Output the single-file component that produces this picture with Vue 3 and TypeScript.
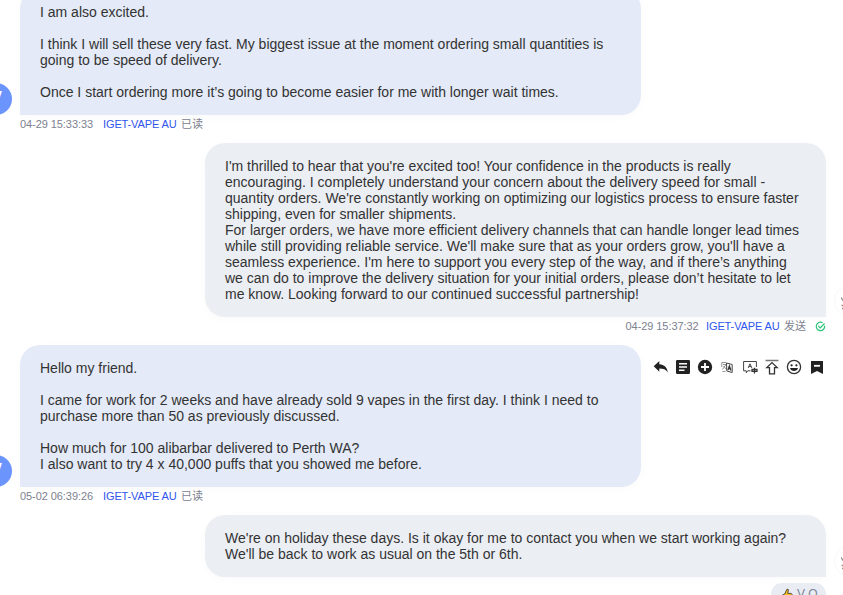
<script setup lang="ts">
interface Message {
  side: 'in' | 'out'
  lines: string[]
  time?: string
  status?: string
  actions?: boolean
}

const account = 'IGET-VAPE AU'

const messages: Message[] = [
  {
    side: 'in',
    lines: [
      'I am also excited.',
      '',
      'I think I will sell these very fast. My biggest issue at the moment ordering small quantities is',
      'going to be speed of delivery.',
      '',
      'Once I start ordering more it’s going to become easier for me with longer wait times.',
    ],
    time: '04-29 15:33:33',
    status: '已读',
  },
  {
    side: 'out',
    lines: [
      "I'm thrilled to hear that you're excited too! Your confidence in the products is really",
      'encouraging. I completely understand your concern about the delivery speed for small -',
      "quantity orders. We're constantly working on optimizing our logistics process to ensure faster",
      'shipping, even for smaller shipments.',
      'For larger orders, we have more efficient delivery channels that can handle longer lead times',
      "while still providing reliable service. We'll make sure that as your orders grow, you'll have a",
      "seamless experience. I'm here to support you every step of the way, and if there’s anything",
      'we can do to improve the delivery situation for your initial orders, please don’t hesitate to let',
      'me know. Looking forward to our continued successful partnership!',
    ],
    time: '04-29 15:37:32',
    status: '发送',
  },
  {
    side: 'in',
    lines: [
      'Hello my friend.',
      '',
      'I came for work for 2 weeks and have already sold 9 vapes in the first day. I think I need to',
      'purchase more than 50 as previously discussed.',
      '',
      'How much for 100 alibarbar delivered to Perth WA?',
      'I also want to try 4 x 40,000 puffs that you showed me before.',
    ],
    time: '05-02 06:39:26',
    status: '已读',
    actions: true,
  },
  {
    side: 'out',
    lines: [
      "We're on holiday these days. Is it okay for me to contact you when we start working again?",
      "We'll be back to work as usual on the 5th or 6th.",
    ],
  },
]
</script>

<template>
  <main class="chat">
    <div class="feed">
      <article v-for="(m, i) in messages" :key="i" class="message" :class="m.side">
        <div class="row">
          <div class="avatar">
            <span v-if="m.side === 'in'">V</span>
            <svg v-else viewBox="0 0 12 14"><path d="M0 1.500l2.500 3.500L5 2" /><path class="warm" d="M.5 9.500H5M1 12.500h6" /></svg>
          </div>
          <div class="bubble">
            <p v-for="(line, n) in m.lines" :key="n">{{ line }}</p>
          </div>
          <div v-if="m.actions" class="actions">
            <svg viewBox="0 0 16 16"><path d="M6.300 2v3.300c5 .3 7.900 3.200 8.500 8.200-2-2.900-4.500-3.900-8.500-3.900v3.200L.7 7.300z" /></svg>
            <svg viewBox="0 0 16 16"><path fill-rule="evenodd" d="M2.200 1h11.600q1.200 0 1.200 1.200v11.600q0 1.200-1.200 1.200H2.200Q1 15 1 13.800V2.200Q1 1 2.200 1zM4 4v1.500h8V4zm0 3.200v1.500h8V7.200zm0 3.300V12h5.500v-1.500z" /></svg>
            <svg viewBox="0 0 16 16"><circle cx="8" cy="8" r="7.200" /><path class="cut" d="M8 4v8M4 8h8" /></svg>
            <svg viewBox="0 0 16 16">
              <path class="faint" d="M2.800 8V3.500H7M4 5.500h3.500M7 5.500l-3.500 5M4.500 7l3 3.500M3.500 12.500h3" />
              <path class="thin" d="M7.500 4l5.700 1.500v8L7.800 12z" />
              <path class="line" d="M9 11l1.400-4 1.500 4.500M9.300 9.700h2.200" />
            </svg>
            <svg viewBox="0 0 16 16">
              <path class="thin" d="M8.500 11.800H5.800L4.300 13.700V11.800H1.600V2.500h12.800V8" />
              <path class="thin" d="M6.200 8.900L8 4.800l1.800 4.100M6.900 7.600h2.200" />
              <path class="line" d="M10 10.500h5v1.800h-5zM12.500 8.800v5.600" />
            </svg>
            <svg viewBox="0 0 16 16"><path class="bar" d="M1.500 1.500h13" /><path class="line" d="M8 3.600l5.200 5h-2.700v6.200h-5V8.600H2.800z" /></svg>
            <svg viewBox="0 0 16 16">
              <circle class="ring" cx="8" cy="8" r="6.600" />
              <circle cx="5.600" cy="6.300" r="1.100" /><circle cx="10.400" cy="6.300" r="1.100" />
              <path d="M4 9h8c-.7 4-7.300 4-8 0z" />
            </svg>
            <svg viewBox="0 0 16 16"><path d="M2 1.900h12v13L8 12l-6 2.900z" /><path class="cut" d="M5 6.800h6" /></svg>
          </div>
        </div>
        <footer v-if="m.time" class="meta">
          <time>{{ m.time }}</time>
          <span class="account">{{ account }}</span>
          <span class="status">{{ m.status }}</span>
          <svg v-if="m.side === 'out'" class="sent" viewBox="0 0 12 12"><path d="M10.500 5.200A4.600 4.600 0 1 1 8.200 1.900M3.500 5.400l2.200 2.200 4.700-4.900" /></svg>
        </footer>
        <div v-else class="reaction">
          <svg viewBox="0 0 14 14"><path d="M1 8.500l4-2L7.500 1.300q2-.3 1.500 1.700l-.7 2.800H12q1.500.8.800 2.500v3.500L11 13.500H5L1 12.500z" /></svg>
          <span>V O</span>
        </div>
      </article>
    </div>
  </main>
</template>

<style>
body {
  background: #fff;
  overflow: hidden;
}
</style>

<style scoped>
.chat {
  height: 595px;
  overflow: hidden;
  font-family: "Liberation Sans", "Noto Sans CJK SC", sans-serif;
}
.feed {
  width: 886px;
  margin: -11px 0 0 -20px;
  display: flex;
  flex-direction: column;
  gap: 10px;
}
.message {
  display: flex;
  flex-direction: column;
}
.row {
  display: flex;
  align-items: flex-end;
  gap: 8px;
}
.out .row {
  flex-direction: row-reverse;
}
.avatar {
  box-sizing: border-box;
  flex: none;
  width: 32px;
  height: 32px;
  border-radius: 50%;
  background: #6b95fc;
  color: #fff;
  display: flex;
  align-items: center;
  justify-content: center;
  font-size: 16px;
  font-weight: bold;
  padding: 0 0 3px 1px;
}
.out .avatar {
  background: #fff;
  border: 1px solid #f8f8f8;
  justify-content: flex-start;
  padding: 4px 0 0 6px;
}
.avatar svg {
  width: 12px;
  height: 14px;
  fill: none;
  stroke: #8d8d8d;
  stroke-width: 1.300;
}
.avatar .warm {
  stroke: #b08476;
}
.bubble {
  box-sizing: border-box;
  flex: none;
  width: 621px;
  padding: 15px 20px;
  border-radius: 20px;
  background: #e4eaf7;
  box-shadow: 0 2px 10px rgba(0, 0, 0, 0.025);
  color: #333;
  font-size: 14px;
  line-height: 16px;
}
.in .bubble {
  border-bottom-left-radius: 0;
}
.out .bubble {
  background: #ebeef3;
  border-bottom-right-radius: 0;
}
.bubble p {
  margin: 0;
  height: 16px;
  white-space: nowrap;
}
.actions {
  align-self: flex-start;
  display: flex;
  gap: 6.300px;
  margin: 14px 0 0 3.500px;
}
.actions svg {
  width: 16px;
  height: 16px;
  fill: #222;
}
.actions .line,
.actions .ring {
  fill: none;
  stroke: #333;
  stroke-width: 1.300;
}
.actions .bar {
  stroke: #777;
  stroke-width: 1.500;
}
.actions .thin {
  fill: none;
  stroke: #444;
  stroke-width: 1;
}
.actions .faint {
  fill: none;
  stroke: #888;
  stroke-width: 0.900;
}
.actions .cut {
  fill: none;
  stroke: #fff;
  stroke-width: 1.800;
}
.meta {
  display: flex;
  align-items: center;
  height: 18px;
  padding: 0 40px;
  font-size: 11px;
  line-height: 18px;
  color: #7d8190;
  white-space: nowrap;
}
.meta time {
  letter-spacing: -0.070px;
}
.out .meta {
  justify-content: flex-end;
}
.account {
  margin-left: 10px;
  color: #2f55eb;
  letter-spacing: -0.130px;
}
.out .account {
  margin-left: 7.500px;
}
.status {
  margin-left: 4.500px;
}
.sent {
  width: 11px;
  height: 11px;
  margin-left: 9px;
  fill: none;
  stroke: #2bc477;
  stroke-width: 1.300;
}
.reaction {
  box-sizing: border-box;
  align-self: flex-end;
  display: flex;
  align-items: center;
  gap: 4px;
  width: 55px;
  height: 22px;
  margin: 6px 40px 0 0;
  padding-left: 9px;
  border-radius: 11px;
  background: #e9edf3;
  color: #7b8499;
  font-size: 12px;
  white-space: nowrap;
}
.reaction svg {
  flex: none;
  width: 13px;
  height: 13px;
  fill: #fcbd1c;
  stroke: #333;
  stroke-width: 0.900;
}
</style>
